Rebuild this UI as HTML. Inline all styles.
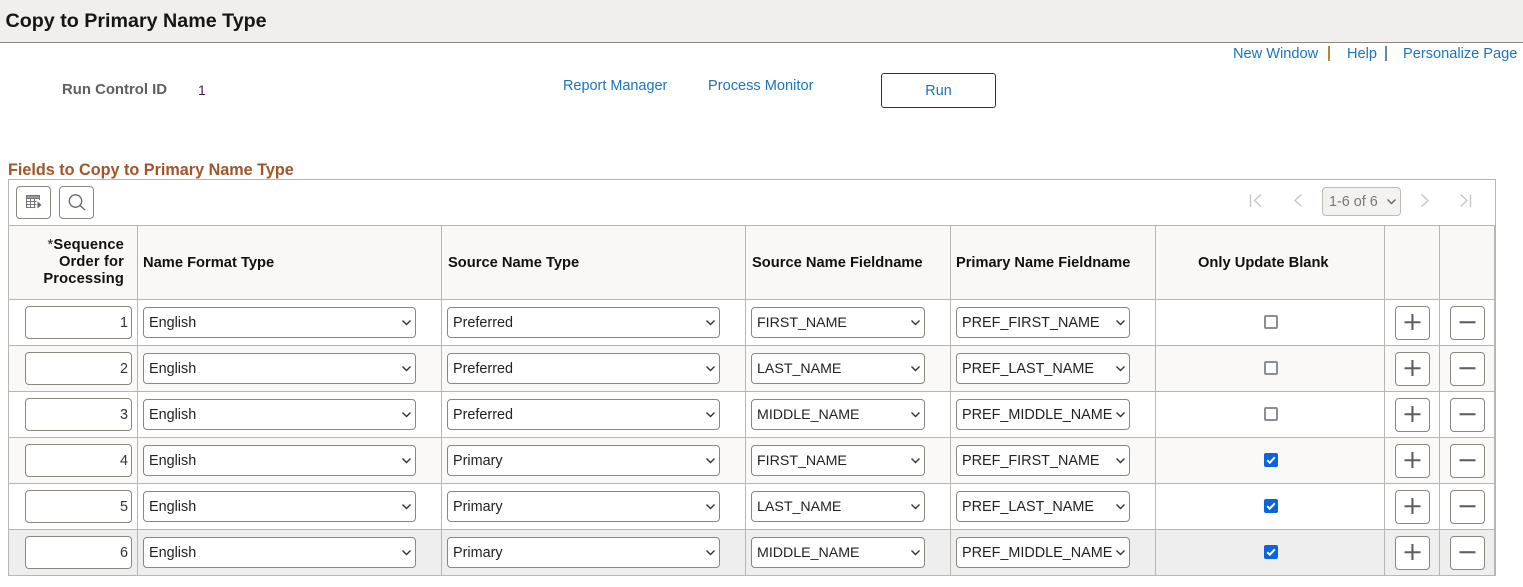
<!DOCTYPE html>
<html>
<head>
<meta charset="utf-8">
<title>Copy to Primary Name Type</title>
<style>
html,body{margin:0;padding:0;background:#fff;}
body{width:1523px;height:587px;position:relative;overflow:hidden;font-family:"Liberation Sans",Arial,sans-serif;font-size:14.4px;color:#222;}
div,a{position:absolute;box-sizing:border-box;white-space:nowrap;}
a{color:#1b75bc;text-decoration:none;font-size:14.6px;line-height:18px;}
.band{left:0;top:0;width:1523px;height:43px;background:#f0efee;border-bottom:1px solid #8c8782;}
.title{left:5.500px;top:9px;font-size:19.7px;line-height:24px;font-weight:bold;color:#161616;}
.sep{width:2px;height:15px;top:46px;}
.lab{left:62px;top:81px;font-weight:bold;color:#5f5f5f;font-size:14.9px;line-height:18px;}
.sec{left:8px;top:160px;font-size:16.2px;line-height:20px;font-weight:bold;color:#a0552a;}
.run{left:881px;top:73px;width:115px;height:35px;border:1px solid #333;border-radius:3px;text-align:center;line-height:34px;color:#1b75bc;font-size:14.4px;}
.grid{left:8px;top:179px;width:1488px;height:397px;border:1px solid #b9b5b0;border-bottom-width:2px;}
.hd{left:9px;top:225px;width:1485px;height:74px;background:#f9f8f7;border-top:1px solid #b9b5b0;}
.vl{top:225px;width:1px;height:350px;background:#b9b5b0;}
.row{left:9px;width:1485px;height:46px;border-top:1px solid #b9b5b0;}
.th{font-weight:bold;color:#111;font-size:14.7px;line-height:17px;}
.tb{top:186px;width:35px;height:33px;border:1px solid #8a8680;border-radius:4px;background:#fff;}
.inp{left:16px;top:6px;width:107px;height:33px;border:1px solid #8a8680;border-radius:4px;background:#fff;text-align:right;padding-right:3px;line-height:33px;font-size:14.4px;color:#333;}
.sel{top:7px;height:31px;border:1px solid #8a8680;border-radius:4px;background:#fff;padding-left:5px;line-height:31px;font-size:14.4px;color:#222;}
.sel svg{position:absolute;right:3.500px;top:11px;stroke-width:1.400;}
.a{left:134px;width:273px;}
.b{left:438px;width:273px;}
.c{left:742px;width:174px;font-size:14.2px;}
.d{left:947px;width:174px;}
.cb{left:1255px;top:15px;width:14px;height:14px;border-radius:2px;}
.off{border:2px solid #8b8e96;background:#fff;}
.on{background:#0a64e0;}
.ib{top:6px;width:35px;height:34px;border:1px solid #8a8680;border-radius:4px;background:#fff;}
.p{left:1386px;}
.m{left:1441px;}
.alt{background:#faf9f7;}
.last{background:#eeeeee;}
svg{display:block;}
</style>
</head>
<body>
<div class="band"></div>
<div class="title">Copy to Primary Name Type</div>
<a style="left:1233px;top:45px">New Window</a>
<div class="sep" style="left:1328px;background:#b5863f"></div>
<a style="left:1347px;top:45px">Help</a>
<div class="sep" style="left:1385px;background:#5f8f8f"></div>
<a style="left:1403px;top:45px">Personalize Page</a>
<div class="lab">Run Control ID</div>
<div style="left:198px;top:81px;line-height:18px;font-size:14px;color:#3a1f4d">1</div>
<a style="left:563px;top:77px;font-size:14.45px">Report Manager</a>
<a style="left:708px;top:77px">Process Monitor</a>
<div class="run">Run</div>
<div class="sec">Fields to Copy to Primary Name Type</div>
<div class="grid"></div>
<div class="tb" style="left:16px"><svg width="33" height="31" viewBox="0 0 33 31" fill="none"><path d="M9.500 8.500h13v3h-13z" fill="#999" stroke="#777"/><path d="M9.500 8.500v12h9M9.500 14.500h10M9.500 17.500h10M13.500 11v9.500M17.500 11v9.500M22.500 11v2" stroke="#777"/><path d="M20.500 14.500l4 3.500-4 3.500z" fill="#666"/></svg></div>
<div class="tb" style="left:59px"><svg width="33" height="31" viewBox="0 0 33 31" fill="none" stroke="#666" stroke-width="1.300"><circle cx="15.500" cy="14" r="6.200"/><path d="M20 18.500l5 4.500"/></svg></div>
<svg style="position:absolute;left:1245px;top:190px" width="230" height="22" viewBox="0 0 230 22" fill="none" stroke="#c6c6c6" stroke-width="1.400"><path d="M5.500 4.500v12.500M16 4.500l-6.500 6 6.500 6"/><path d="M56.500 4.500l-6.500 6 6.500 6"/><path d="M176.500 4.500l6.500 6-6.500 6"/><path d="M215.500 4.500l6.500 6-6.500 6M225.500 4.500v12.500"/></svg>
<div style="left:1322px;top:187px;width:79px;height:29px;border:1px solid #bdbab5;border-radius:4px;background:#f3f2f1;color:#777;font-size:14.4px;line-height:29px;padding-left:6px">1-6 of 6<svg style="position:absolute;right:3px;top:10px" width="11" height="8" viewBox="0 0 11 8" fill="none" stroke="#666" stroke-width="1.400"><path d="M1.500 1.500l4 4 4-4"/></svg></div>

<div class="hd"></div>
<div class="th" style="left:20px;top:237px;width:104px;text-align:right;letter-spacing:.15px"><span style="font-weight:normal">*</span>Sequence<br>Order for<br>Processing</div>
<div class="th" style="left:143px;top:255px">Name Format Type</div>
<div class="th" style="left:448px;top:255px">Source Name Type</div>
<div class="th" style="left:752px;top:255px">Source Name Fieldname</div>
<div class="th" style="left:956px;top:255px;font-size:14.6px">Primary Name Fieldname</div>
<div class="th" style="left:1198px;top:255px">Only Update Blank</div>

<div class="row" style="top:299px"><div class="inp">1</div><div class="sel a">English<svg width="11" height="8" viewBox="0 0 11 8" fill="none" stroke="#333"><path d="M1.500 1.500l4 4 4-4"/></svg></div><div class="sel b">Preferred<svg width="11" height="8" viewBox="0 0 11 8" fill="none" stroke="#333"><path d="M1.500 1.500l4 4 4-4"/></svg></div><div class="sel c">FIRST_NAME<svg width="11" height="8" viewBox="0 0 11 8" fill="none" stroke="#333"><path d="M1.500 1.500l4 4 4-4"/></svg></div><div class="sel d">PREF_FIRST_NAME<svg width="11" height="8" viewBox="0 0 11 8" fill="none" stroke="#333"><path d="M1.500 1.500l4 4 4-4"/></svg></div><div class="cb off"></div><div class="ib p"><svg width="33" height="32" viewBox="0 0 33 32"><path d="M8.500 14.200h16v2.100h-16zM15.400 7h2.100v16h-2.100z" fill="#5f5f5f"/></svg></div><div class="ib m"><svg width="33" height="32" viewBox="0 0 33 32"><path d="M8.500 14.200h16v2.100h-16z" fill="#5f5f5f"/></svg></div></div>

<div class="row alt" style="top:345px"><div class="inp">2</div><div class="sel a">English<svg width="11" height="8" viewBox="0 0 11 8" fill="none" stroke="#333"><path d="M1.500 1.500l4 4 4-4"/></svg></div><div class="sel b">Preferred<svg width="11" height="8" viewBox="0 0 11 8" fill="none" stroke="#333"><path d="M1.500 1.500l4 4 4-4"/></svg></div><div class="sel c">LAST_NAME<svg width="11" height="8" viewBox="0 0 11 8" fill="none" stroke="#333"><path d="M1.500 1.500l4 4 4-4"/></svg></div><div class="sel d">PREF_LAST_NAME<svg width="11" height="8" viewBox="0 0 11 8" fill="none" stroke="#333"><path d="M1.500 1.500l4 4 4-4"/></svg></div><div class="cb off"></div><div class="ib p"><svg width="33" height="32" viewBox="0 0 33 32"><path d="M8.500 14.200h16v2.100h-16zM15.400 7h2.100v16h-2.100z" fill="#5f5f5f"/></svg></div><div class="ib m"><svg width="33" height="32" viewBox="0 0 33 32"><path d="M8.500 14.200h16v2.100h-16z" fill="#5f5f5f"/></svg></div></div>

<div class="row" style="top:391px"><div class="inp">3</div><div class="sel a">English<svg width="11" height="8" viewBox="0 0 11 8" fill="none" stroke="#333"><path d="M1.500 1.500l4 4 4-4"/></svg></div><div class="sel b">Preferred<svg width="11" height="8" viewBox="0 0 11 8" fill="none" stroke="#333"><path d="M1.500 1.500l4 4 4-4"/></svg></div><div class="sel c">MIDDLE_NAME<svg width="11" height="8" viewBox="0 0 11 8" fill="none" stroke="#333"><path d="M1.500 1.500l4 4 4-4"/></svg></div><div class="sel d">PREF_MIDDLE_NAME<svg width="11" height="8" viewBox="0 0 11 8" fill="none" stroke="#333"><path d="M1.500 1.500l4 4 4-4"/></svg></div><div class="cb off"></div><div class="ib p"><svg width="33" height="32" viewBox="0 0 33 32"><path d="M8.500 14.200h16v2.100h-16zM15.400 7h2.100v16h-2.100z" fill="#5f5f5f"/></svg></div><div class="ib m"><svg width="33" height="32" viewBox="0 0 33 32"><path d="M8.500 14.200h16v2.100h-16z" fill="#5f5f5f"/></svg></div></div>

<div class="row alt" style="top:437px"><div class="inp">4</div><div class="sel a">English<svg width="11" height="8" viewBox="0 0 11 8" fill="none" stroke="#333"><path d="M1.500 1.500l4 4 4-4"/></svg></div><div class="sel b">Primary<svg width="11" height="8" viewBox="0 0 11 8" fill="none" stroke="#333"><path d="M1.500 1.500l4 4 4-4"/></svg></div><div class="sel c">FIRST_NAME<svg width="11" height="8" viewBox="0 0 11 8" fill="none" stroke="#333"><path d="M1.500 1.500l4 4 4-4"/></svg></div><div class="sel d">PREF_FIRST_NAME<svg width="11" height="8" viewBox="0 0 11 8" fill="none" stroke="#333"><path d="M1.500 1.500l4 4 4-4"/></svg></div><div class="cb on"><svg width="14" height="14" viewBox="0 0 14 14" fill="none" stroke="#fff" stroke-width="2"><path d="M3.200 7.200l2.600 2.500 5-5.400"/></svg></div><div class="ib p"><svg width="33" height="32" viewBox="0 0 33 32"><path d="M8.500 14.200h16v2.100h-16zM15.400 7h2.100v16h-2.100z" fill="#5f5f5f"/></svg></div><div class="ib m"><svg width="33" height="32" viewBox="0 0 33 32"><path d="M8.500 14.200h16v2.100h-16z" fill="#5f5f5f"/></svg></div></div>

<div class="row" style="top:483px"><div class="inp">5</div><div class="sel a">English<svg width="11" height="8" viewBox="0 0 11 8" fill="none" stroke="#333"><path d="M1.500 1.500l4 4 4-4"/></svg></div><div class="sel b">Primary<svg width="11" height="8" viewBox="0 0 11 8" fill="none" stroke="#333"><path d="M1.500 1.500l4 4 4-4"/></svg></div><div class="sel c">LAST_NAME<svg width="11" height="8" viewBox="0 0 11 8" fill="none" stroke="#333"><path d="M1.500 1.500l4 4 4-4"/></svg></div><div class="sel d">PREF_LAST_NAME<svg width="11" height="8" viewBox="0 0 11 8" fill="none" stroke="#333"><path d="M1.500 1.500l4 4 4-4"/></svg></div><div class="cb on"><svg width="14" height="14" viewBox="0 0 14 14" fill="none" stroke="#fff" stroke-width="2"><path d="M3.200 7.200l2.600 2.500 5-5.400"/></svg></div><div class="ib p"><svg width="33" height="32" viewBox="0 0 33 32"><path d="M8.500 14.200h16v2.100h-16zM15.400 7h2.100v16h-2.100z" fill="#5f5f5f"/></svg></div><div class="ib m"><svg width="33" height="32" viewBox="0 0 33 32"><path d="M8.500 14.200h16v2.100h-16z" fill="#5f5f5f"/></svg></div></div>

<div class="row last" style="top:529px;height:46px"><div class="inp">6</div><div class="sel a">English<svg width="11" height="8" viewBox="0 0 11 8" fill="none" stroke="#333"><path d="M1.500 1.500l4 4 4-4"/></svg></div><div class="sel b">Primary<svg width="11" height="8" viewBox="0 0 11 8" fill="none" stroke="#333"><path d="M1.500 1.500l4 4 4-4"/></svg></div><div class="sel c">MIDDLE_NAME<svg width="11" height="8" viewBox="0 0 11 8" fill="none" stroke="#333"><path d="M1.500 1.500l4 4 4-4"/></svg></div><div class="sel d">PREF_MIDDLE_NAME<svg width="11" height="8" viewBox="0 0 11 8" fill="none" stroke="#333"><path d="M1.500 1.500l4 4 4-4"/></svg></div><div class="cb on"><svg width="14" height="14" viewBox="0 0 14 14" fill="none" stroke="#fff" stroke-width="2"><path d="M3.200 7.200l2.600 2.500 5-5.400"/></svg></div><div class="ib p"><svg width="33" height="32" viewBox="0 0 33 32"><path d="M8.500 14.200h16v2.100h-16zM15.400 7h2.100v16h-2.100z" fill="#5f5f5f"/></svg></div><div class="ib m"><svg width="33" height="32" viewBox="0 0 33 32"><path d="M8.500 14.200h16v2.100h-16z" fill="#5f5f5f"/></svg></div></div>

<div class="vl" style="left:137px"></div>
<div class="vl" style="left:441px"></div>
<div class="vl" style="left:745px"></div>
<div class="vl" style="left:950px"></div>
<div class="vl" style="left:1155px"></div>
<div class="vl" style="left:1384px"></div>
<div class="vl" style="left:1439px"></div>
<div class="vl" style="left:1494px"></div>
</body>
</html>
